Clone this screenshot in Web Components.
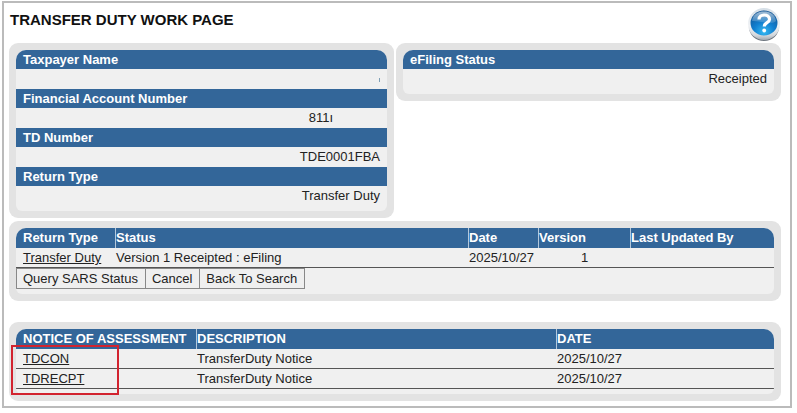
<!DOCTYPE html>
<html lang="en">
<head>
<meta charset="utf-8">
<title>Transfer Duty Work Page</title>
<style>
  body {
    margin: 0;
    background-color: #fff;
    color: #222;
    font-family: "Liberation Sans", Arial, sans-serif;
    font-size: 13px;
  }
</style>
</head>
<body>
<work-page></work-page>

<script>
class HelpButton extends HTMLElement {
  constructor() {
    super();
    this.shadowDOM = this.attachShadow({ mode: 'open' });
  }

  connectedCallback() {
    this.shadowDOM.innerHTML = `
      <style>
        :host {
          display: block;
        }
        button {
          display: block;
          padding: 0;
          border: 0;
          background: none;
          cursor: pointer;
        }
        svg {
          display: block;
        }
      </style>

      <button type="button" aria-label="Help">
        <svg width="34" height="34" viewBox="0 0 34 34">
          <defs>
            <linearGradient id="rim" x1="0" y1="0" x2="0" y2="1">
              <stop offset="0" stop-color="#d5dee6"/>
              <stop offset="0.55" stop-color="#f0f2f5"/>
              <stop offset="0.85" stop-color="#d4d8dd"/>
              <stop offset="1" stop-color="#a2a9b1"/>
            </linearGradient>
            <radialGradient id="ball" cx="0.5" cy="0.85" r="0.85">
              <stop offset="0" stop-color="#35b9f2"/>
              <stop offset="0.45" stop-color="#117fd0"/>
              <stop offset="1" stop-color="#135391"/>
            </radialGradient>
            <linearGradient id="shine" x1="0" y1="0" x2="0" y2="1">
              <stop offset="0" stop-color="#fff" stop-opacity="0.6"/>
              <stop offset="1" stop-color="#fff" stop-opacity="0.12"/>
            </linearGradient>
          </defs>
          <ellipse cx="17" cy="19" rx="15" ry="14" fill="#6f7780"/>
          <circle cx="17" cy="16" r="16" fill="url(#rim)"/>
          <ellipse cx="17" cy="15" rx="13.500" ry="12.500" fill="url(#ball)"/>
          <path d="M5 13C6 6 11 3.500 17 3.500S28 6 29 13C25 18 12 12 5 13Z" fill="url(#shine)"/>
          <path d="M12 11.500C12 5.500 22.500 5.500 22.500 11.500C22.500 15 17.300 14.500 17.300 18.500" fill="none" stroke="#fff" stroke-width="3.200"/>
          <circle cx="17.200" cy="22.500" r="1.900" fill="#fff"/>
        </svg>
      </button>
    `;
  }
}

class InfoPanel extends HTMLElement {
  constructor() {
    super();
    this.shadowDOM = this.attachShadow({ mode: 'open' });
  }

  connectedCallback() {
    this.shadowDOM.innerHTML = `
      <style>
        :host {
          display: block;
          padding: 7px;
          border-radius: 9px;
          background-color: #e3e3e3;
        }
        .inner {
          padding-bottom: 5px;
          border-radius: 10px 10px 6px 6px;
          overflow: hidden;
          background-color: #f0f0f0;
        }
      </style>

      <div class="inner"><slot></slot></div>
    `;
  }
}

class InfoField extends HTMLElement {
  constructor() {
    super();
    this.shadowDOM = this.attachShadow({ mode: 'open' });
  }

  connectedCallback() {
    this.shadowDOM.innerHTML = `
      <style>
        :host {
          display: block;
        }
        .label {
          padding: 0 7px;
          line-height: 19px;
          font-weight: bold;
          color: #fff;
          background-color: #336699;
        }
        .value {
          display: flex;
          justify-content: flex-end;
          height: 20px;
          padding: 0 7px;
          line-height: 20px;
        }
      </style>

      <div class="label">${this.getAttribute('label')}</div>
      <div class="value"><slot></slot></div>
    `;
  }
}

// columns: [{ title, width, align }], rows: arrays of cell markup
class RecordTable extends HTMLElement {
  constructor() {
    super();
    this.shadowDOM = this.attachShadow({ mode: 'open' });
  }

  set data(data) {
    this._data = data;
    this.render();
  }

  render() {
    const { columns, rows } = this._data;
    this.shadowDOM.innerHTML = `
      <style>
        :host {
          display: block;
        }
        table {
          width: 100%;
          table-layout: fixed;
          border-collapse: separate;
          border-spacing: 0;
        }
        th, td {
          height: 19px;
          padding: 0;
          line-height: 19px;
          text-align: left;
          white-space: nowrap;
        }
        th {
          height: 20px;
          line-height: 20px;
          color: #fff;
          background-color: #336699;
        }
        th + th {
          border-left: 1px solid #b4c8dc;
        }
        td {
          border-bottom: 1px solid #555;
        }
        td + td {
          padding-left: 1px;
        }
        th:first-child, td:first-child {
          padding-left: 7px;
        }
        td.center {
          text-align: center;
        }
        a {
          color: inherit;
        }
      </style>

      <table>
        <colgroup>${columns.map((c) => `<col style="width: ${c.width}">`).join('')}</colgroup>
        <thead>
          <tr>${columns.map((c) => `<th scope="col">${c.title}</th>`).join('')}</tr>
        </thead>
        <tbody>
          ${rows.map((row) => `
            <tr>${row.map((cell, i) => `<td class="${columns[i].align || ''}">${cell}</td>`).join('')}</tr>
          `).join('')}
        </tbody>
      </table>
    `;
  }
}

class WorkPage extends HTMLElement {
  constructor() {
    super();
    this.shadowDOM = this.attachShadow({ mode: 'open' });
  }

  connectedCallback() {
    this.shadowDOM.innerHTML = `
      <style>
        * {
          box-sizing: border-box;
        }
        :host {
          display: block;
          margin: 1px 5px 0 2px;
          padding: 0 9px 5px 5px;
          border: 2px solid #bbb;
        }
        header {
          display: flex;
          justify-content: space-between;
          height: 40px;
          padding: 5px 0 0 1px;
        }
        h1 {
          margin: 0;
          font-size: 15px;
          line-height: 24px;
          color: #111;
        }
        .top {
          display: grid;
          grid-template-columns: 1fr 1fr;
          align-items: start;
          gap: 2px;
          margin-bottom: 3px;
        }
        .hidden-digits {
          width: 47px;
        }
        .mark {
          width: 1px;
          height: 4px;
          margin-top: 9px;
          background-color: #7f9fb5;
        }
        .actions {
          display: flex;
        }
        .actions button {
          height: 21px;
          padding: 0 7px 0 6px;
          border: 1px solid #888;
          font: inherit;
          color: inherit;
          background-color: #efefef;
        }
        .actions button + button {
          margin-left: -1px;
        }
        .notices {
          position: relative;
          margin-top: 21px;
        }
        .highlight {
          position: absolute;
          top: 23px;
          left: 2px;
          width: 108px;
          height: 50px;
          border: 2px solid #d2232f;
          pointer-events: none;
        }
      </style>

      <header>
        <h1>TRANSFER DUTY WORK PAGE</h1>
        <help-button></help-button>
      </header>
      <div class="top">
        <info-panel>
          <info-field label="Taxpayer Name"><span class="mark"></span></info-field>
          <info-field label="Financial Account Number">811ı<span class="hidden-digits"></span></info-field>
          <info-field label="TD Number">TDE0001FBA</info-field>
          <info-field label="Return Type">Transfer Duty</info-field>
        </info-panel>
        <info-panel>
          <info-field label="eFiling Status">Receipted</info-field>
        </info-panel>
      </div>
      <info-panel>
        <record-table id="returns"></record-table>
        <div class="actions">
          <button type="button">Query SARS Status</button>
          <button type="button">Cancel</button>
          <button type="button">Back To Search</button>
        </div>
      </info-panel>
      <div class="notices">
        <info-panel>
          <record-table id="notices"></record-table>
        </info-panel>
        <div class="highlight"></div>
      </div>
    `;

    this.shadowDOM.querySelector('#returns').data = {
      columns: [
        { title: 'Return Type', width: '99px' },
        { title: 'Status', width: 'auto' },
        { title: 'Date', width: '70px' },
        { title: 'Version', width: '92px', align: 'center' },
        { title: 'Last Updated By', width: '144px' },
      ],
      rows: [
        ['<a href="#">Transfer Duty</a>', 'Version 1 Receipted : eFiling', '2025/10/27', '1', ''],
      ],
    };
    this.shadowDOM.querySelector('#notices').data = {
      columns: [
        { title: 'NOTICE OF ASSESSMENT', width: '180px' },
        { title: 'DESCRIPTION', width: 'auto' },
        { title: 'DATE', width: '218px' },
      ],
      rows: [
        ['<a href="#">TDCON</a>', 'TransferDuty Notice', '2025/10/27'],
        ['<a href="#">TDRECPT</a>', 'TransferDuty Notice', '2025/10/27'],
      ],
    };
  }
}

customElements.define('help-button', HelpButton);
customElements.define('info-panel', InfoPanel);
customElements.define('info-field', InfoField);
customElements.define('record-table', RecordTable);
customElements.define('work-page', WorkPage);
</script>
</body>
</html>
